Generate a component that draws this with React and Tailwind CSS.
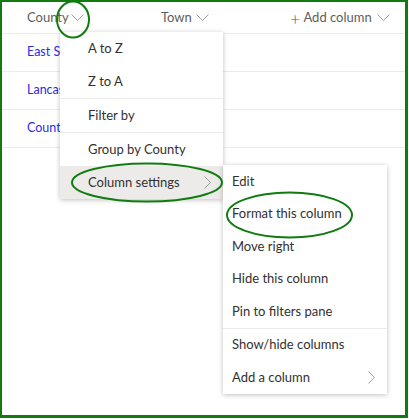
import React from 'react';

const font = { fontFamily: 'Lato, "Open Sans", sans-serif' };

const ChevronDown = ({ className = '' }) => (
  <svg width="13" height="8" viewBox="0 0 13 8" className={className}>
    <polyline points="0.5,0.5 6.5,6.5 12.5,0.5" fill="none" stroke="#a19f9d" strokeWidth="1" />
  </svg>
);

const ChevronRight = () => (
  <svg width="7" height="13" viewBox="0 0 7 13">
    <polyline points="0.5,0.5 6.5,6.5 0.5,12.5" fill="none" stroke="#a19f9d" strokeWidth="1" />
  </svg>
);

const rows = ['East Sussex', 'Lancashire', 'County Durham'];

const MenuItem = ({ label, pad = 'pl-[28px]', h = 'h-[33px]', active, sub }) => (
  <div
    className={`${h} flex items-center justify-between pr-[12px] ${pad} text-[13px] text-[#323130] whitespace-nowrap ${
      active ? 'bg-[#edebe9]' : ''
    }`}
  >
    <span>{label}</span>
    {sub && <ChevronRight />}
  </div>
);

const Sep = () => <div className="h-px bg-[#edebe9]" />;

const SubItem = (props) => <MenuItem pad="pl-[9px]" h="h-[32.5px]" {...props} />;

export default function App() {
  return (
    <div
      className="relative w-[408px] h-[418px] bg-white border-l-2 border-t-2 border-r-[3px] border-b-[3px] border-[#107c10] overflow-hidden"
      style={font}
    >
      {/* header */}
      <div className="h-[32px] flex items-center border-b border-[#edebe9] text-[13px] text-[#605e5c] whitespace-nowrap">
        <div className="flex items-center w-[159px] pl-[25px]">
          <span>County</span>
          <ChevronDown className="ml-[2px]" />
        </div>
        <div className="flex items-center w-[129px]">
          <span>Town</span>
          <ChevronDown className="ml-[4px]" />
        </div>
        <div className="flex items-center">
          <span className="text-[18px] font-light leading-none mr-[3px]">+</span>
          <span>Add column</span>
          <ChevronDown className="ml-[5px]" />
        </div>
      </div>

      {/* rows */}
      {rows.map((r) => (
        <div key={r} className="h-[38px] flex items-center border-b border-[#edebe9] pl-[25px] text-[12.5px] text-[#2b2be8]">
          {r}
        </div>
      ))}

      {/* main menu */}
      <div className="absolute left-[58px] top-[30px] w-[163px] bg-white shadow-[0_1px_5px_rgba(0,0,0,0.25)]">
        <MenuItem label="A to Z" />
        <MenuItem label="Z to A" />
        <Sep />
        <MenuItem label="Filter by" />
        <Sep />
        <MenuItem label="Group by County" />
        <MenuItem label="Column settings" active sub />
      </div>

      {/* sub menu */}
      <div className="absolute left-[221px] top-[163px] w-[164px] bg-white shadow-[0_1px_5px_rgba(0,0,0,0.25)]">
        <SubItem label="Edit" />
        <SubItem label="Format this column" />
        <SubItem label="Move right" />
        <SubItem label="Hide this column" />
        <SubItem label="Pin to filters pane" />
        <Sep />
        <SubItem label="Show/hide columns" />
        <SubItem label="Add a column" sub />
      </div>

      {/* annotation ellipses */}
      <svg className="absolute -left-[2px] -top-[2px] pointer-events-none" width="409" height="419">
        <ellipse cx="73" cy="19.5" rx="16" ry="18" fill="none" stroke="#107c10" strokeWidth="2" />
        <ellipse cx="147" cy="182.5" rx="75" ry="19" fill="none" stroke="#107c10" strokeWidth="2" />
        <ellipse cx="289.5" cy="215" rx="62.5" ry="22.5" fill="none" stroke="#107c10" strokeWidth="2" />
      </svg>
    </div>
  );
}
